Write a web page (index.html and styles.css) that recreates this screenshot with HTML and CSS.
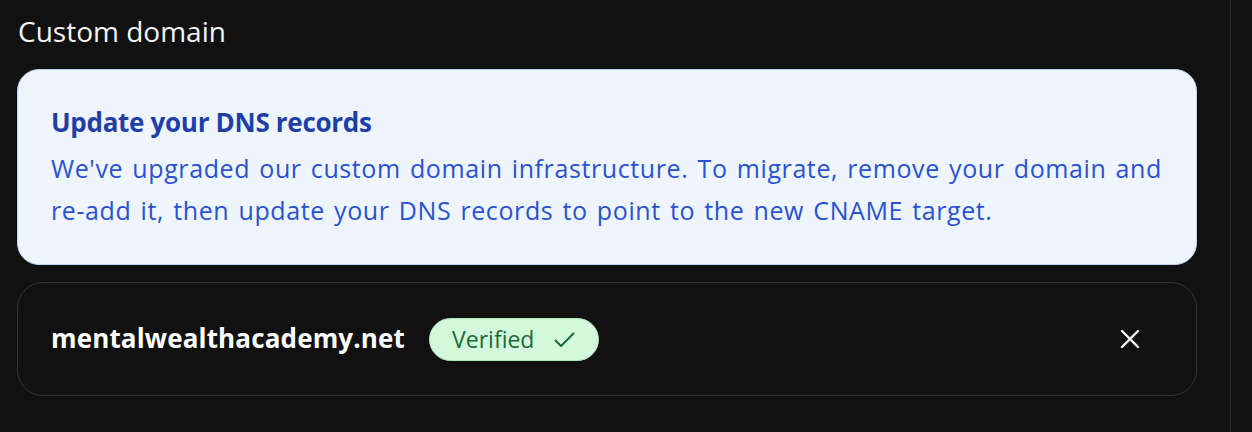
FILE: index.html
```html
<!DOCTYPE html>
<html>
<head>
<meta charset="utf-8">
<link rel="stylesheet" href="styles.css">
</head>
<body>
<main class="panel">
  <h2 class="section-title">Custom domain</h2>
  <div class="notice">
    <div class="notice-title">Update your DNS records</div>
    <p class="notice-text">We've upgraded our custom domain infrastructure. To migrate, remove your domain and <span class="nowrap">re-add</span> it, then update your DNS records to point to the new CNAME target.</p>
  </div>
  <div class="domain-card">
    <span class="domain-name">mentalwealthacademy.net</span>
    <span class="badge">Verified
      <svg class="check" width="21" height="16" viewBox="0 0 21 16" fill="none" stroke="currentColor" stroke-width="2" stroke-linecap="round" stroke-linejoin="round"><path d="M1.5 8.5l5.5 5.5L19.5 1.5"/></svg>
    </span>
    <button class="remove" aria-label="Remove">
      <svg width="20" height="20" viewBox="0 0 20 20" fill="none" stroke="currentColor" stroke-width="2.4" stroke-linecap="round"><path d="M2 2l16 16M18 2L2 18"/></svg>
    </button>
  </div>
</main>
</body>
</html>
```
FILE: styles.css
```css
html, body {
  margin: 0;
  padding: 0;
  background: #121111;
}
body {
  font-family: "Open Sans", "Noto Sans", sans-serif;
  height: 432px;
  overflow: hidden;
}
.panel {
  width: 1213px;
  height: 432px;
  padding-left: 17px;
  border-right: 1px solid #2c2b2b;
  box-sizing: content-box;
}
.section-title {
  margin: 0;
  padding: 13px 0 0 1px;
  height: 69px;
  box-sizing: border-box;
  font-size: 28px;
  line-height: 36px;
  font-weight: 400;
  color: #f4f4f4;
}
.notice {
  width: 1180px;
  box-sizing: border-box;
  background: #eef5ff;
  border: 1px solid #bcd2f3;
  border-radius: 22px;
  padding: 36px 20px 33px 33px;
}
.notice-title {
  font-size: 26px;
  line-height: 32px;
  font-weight: 700;
  letter-spacing: -0.3px;
  color: #1f3fa6;
}
.notice-text {
  margin: 9px 0 0;
  font-size: 25px;
  line-height: 42px;
  letter-spacing: 0.6px;
  word-spacing: 2.1px;
  color: #2a52cf;
}
.nowrap {
  white-space: nowrap;
}
.domain-card {
  margin-top: 17px;
  width: 1180px;
  height: 114px;
  box-sizing: border-box;
  border: 1.5px solid #363434;
  border-radius: 26px;
  display: flex;
  align-items: center;
  padding: 0 56px 0 33px;
}
.domain-name {
  font-size: 26px;
  font-weight: 700;
  letter-spacing: 0.15px;
  color: #ffffff;
  margin-top: -3px;
}
.badge {
  margin-left: 24px;
  height: 43px;
  box-sizing: border-box;
  padding: 0 23px 0 22px;
  border-radius: 22px;
  background: #d3f8dc;
  border: 1px solid #a9e6b8;
  color: #1c6a37;
  font-size: 23px;
  display: inline-flex;
  align-items: center;
  gap: 20px;
}
.check {
  display: block;
  margin-top: 2px;
}
.remove {
  margin-left: auto;
  background: none;
  border: 0;
  padding: 0;
  color: #ffffff;
  display: flex;
  cursor: pointer;
}
```
